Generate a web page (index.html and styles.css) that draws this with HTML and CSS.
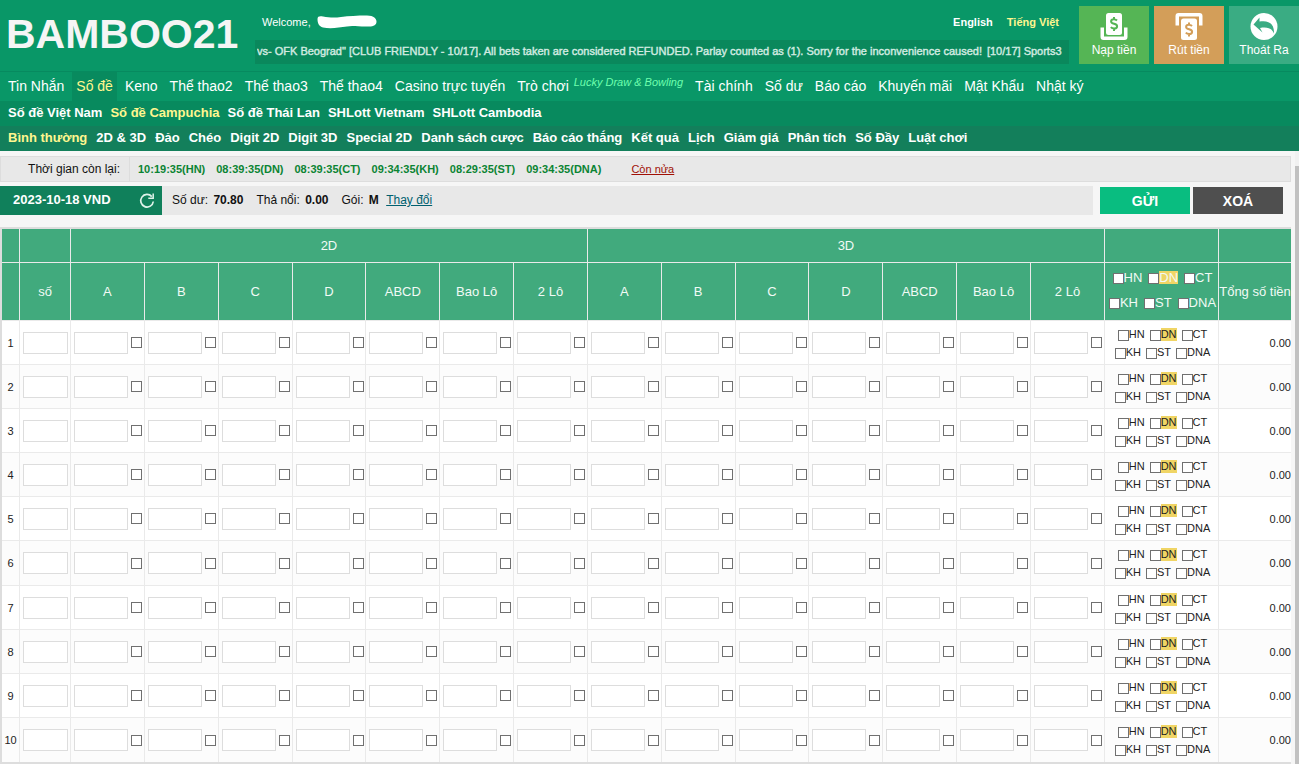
FILE: index.html
```html
<!DOCTYPE html>
<html lang="vi">
<head>
<meta charset="utf-8">
<title>BAMBOO21</title>
<link rel="stylesheet" href="styles.css">
</head>
<body>
<header class="header">
  <div class="masthead">
    <h1 class="logo">BAMBOO21</h1>
    <div class="account">
      <div class="welcome-row">
        <span>Welcome,</span>
        <svg class="user-mask" width="60" height="14" viewBox="0 0 60 14" aria-hidden="true"><path d="M0.500 4C0.500 1 3 1 6 1.500C12 2.500 17 3 24 2C32 1 40 0.500 50 0.500C57 0.500 59.500 4 59.500 6.500C59.500 10 57 11.500 52 11.500C42 12 36 10 30 11.500C22 12.500 14 14 6 12.500C2 11.500 0.500 8 0.500 4Z" fill="#fff"/></svg>
        <nav class="languages"><a href="#">English</a><a href="#" class="is-active">Tiếng Việt</a></nav>
      </div>
      <div class="ticker"><div class="ticker-view"><span class="ticker-text">vs- OFK Beograd" [CLUB FRIENDLY - 10/17]. All bets taken are considered REFUNDED. Parlay counted as (1). Sorry for the inconvenience caused!</span><span class="ticker-text">[10/17] Sports3</span></div></div>
    </div>
    <div class="actions">
      <button class="action action-deposit" type="button">
        <svg width="28" height="28" viewBox="0 0 28 28" aria-hidden="true"><path d="M0.500 14.500h3.500v9h20v-9h3.500V24a3 3 0 0 1-3 3h-21a3 3 0 0 1-3-3z" fill="#fff"/><rect x="6" y="0" width="16" height="22" rx="2.500" fill="#fff"/><path d="M17 7.500c-1-1-2-1.300-3-1.300-1.800 0-2.900.8-2.900 2.200 0 3.200 6 1.600 6 4.800 0 1.500-1.200 2.400-3 2.400-1.300 0-2.500-.5-3.300-1.400M14 4v2.500M14 15.500v2.500" fill="none" stroke="#55b555" stroke-width="2"/></svg>
        <span>Nạp tiền</span>
      </button>
      <button class="action action-withdraw" type="button">
        <svg width="28" height="28" viewBox="0 0 28 28" aria-hidden="true"><path d="M0.500 12.500h3.500V3.500h20v9h3.500V3a3 3 0 0 0-3-3h-21a3 3 0 0 0-3 3z" fill="#fff"/><rect x="6" y="5.500" width="16" height="21.500" rx="2.500" fill="#fff"/><path d="M17 13c-1-1-2-1.300-3-1.300-1.800 0-2.900.8-2.900 2.200 0 3.200 6 1.600 6 4.800 0 1.500-1.200 2.400-3 2.400-1.300 0-2.500-.5-3.300-1.400M14 9.500v2.500M14 21v2.500" fill="none" stroke="#d39e59" stroke-width="2"/></svg>
        <span>Rút tiền</span>
      </button>
      <button class="action action-logout" type="button">
        <svg width="28" height="28" viewBox="0 0 28 28" aria-hidden="true"><circle cx="14" cy="13.500" r="13.500" fill="#fff"/><path d="M3.500 11.500L9.500 4.500L9.500 8.500C18 7 24.500 10 24 20.500C22 15.500 17.500 13.500 10 15L12.500 19.500Z" fill="#3aac83"/></svg>
        <span>Thoát Ra</span>
      </button>
    </div>
  </div>
  <nav class="menu menu-main">
    <a href="#">Tin Nhắn</a><a href="#" class="is-active">Số đề</a><a href="#">Keno</a><a href="#">Thể thao2</a><a href="#">Thể thao3</a><a href="#">Thể thao4</a><a href="#">Casino trực tuyến</a><a href="#">Trò chơi <em>Lucky Draw &amp; Bowling</em></a><a href="#">Tài chính</a><a href="#">Số dư</a><a href="#">Báo cáo</a><a href="#">Khuyến mãi</a><a href="#">Mật Khẩu</a><a href="#">Nhật ký</a>
  </nav>
  <nav class="menu menu-region">
    <a href="#">Số đề Việt Nam</a><a href="#" class="is-active">Số đề Campuchia</a><a href="#">Số đề Thái Lan</a><a href="#">SHLott Vietnam</a><a href="#">SHLott Cambodia</a>
  </nav>
  <nav class="menu menu-type">
    <a href="#" class="is-active">Bình thường</a><a href="#">2D &amp; 3D</a><a href="#">Đảo</a><a href="#">Chéo</a><a href="#">Digit 2D</a><a href="#">Digit 3D</a><a href="#">Special 2D</a><a href="#">Danh sách cược</a><a href="#">Báo cáo thắng</a><a href="#">Kết quả</a><a href="#">Lịch</a><a href="#">Giảm giá</a><a href="#">Phân tích</a><a href="#">Số Đầy</a><a href="#">Luật chơi</a>
  </nav>
</header>
<div class="body">
  <main class="content">
    <section class="timer">
      <span class="timer-label">Thời gian còn lại:</span>
      <div class="timer-list"><span>10:19:35(HN)</span><span>08:39:35(DN)</span><span>08:39:35(CT)</span><span>09:34:35(KH)</span><span>08:29:35(ST)</span><span>09:34:35(DNA)</span></div>
      <a href="#" class="more">Còn nửa</a>
    </section>
    <section class="toolbar">
      <div class="draw"><span>2023-10-18 VND</span>
        <button class="refresh" type="button" aria-label="Refresh"><svg width="16" height="16" viewBox="0 0 16 16"><path d="M12.800 3.600A6.300 6.300 0 1 0 14.300 8.500" fill="none" stroke="#dff3ea" stroke-width="1.700"/><path d="M14.200 0.500V5.200H9.300" fill="none" stroke="#dff3ea" stroke-width="1.500"/></svg></button>
      </div>
      <div class="balance">
        <span>Số dư: <b>70.80</b></span><span>Thả nổi: <b>0.00</b></span><span>Gói: <b>M</b> <a href="#">Thay đổi</a></span>
      </div>
      <div class="submit">
        <button class="btn btn-send" type="button">GỬI</button>
        <button class="btn btn-clear" type="button">XOÁ</button>
      </div>
    </section>
    <div class="sheet">
      <table class="bets">
        <colgroup><col class="col-index"><col class="col-number"><col span="14"><col class="col-places"><col class="col-total"></colgroup>
        <thead>
          <tr class="groups"><th></th><th></th><th colspan="7">2D</th><th colspan="7">3D</th><th></th><th></th></tr>
          <tr class="titles" id="titles"><th></th><th>số</th></tr>
        </thead>
        <tbody id="rows"></tbody>
      </table>
    </div>
  </main>
  <div class="scrollbar"><div class="scroll-thumb"></div></div>
</div>
<script src="app.js"></script>
</body>
</html>
```

FILE: styles.css
```css
* { box-sizing: border-box; }
body {
  margin: 0;
  min-height: 100vh;
  display: flex;
  flex-direction: column;
  background: #f6f6f6;
  color: #222;
  font: 11px/16px "Liberation Sans", Arial, sans-serif;
}
button { font-family: inherit; border: 0; padding: 0; cursor: pointer; }
a { text-decoration: none; color: inherit; }
.header { background: #099767; color: #fff; }
.masthead {
  display: grid;
  grid-template-columns: 247px minmax(0, 1fr) auto;
  column-gap: 8px;
  height: 72px;
  border-bottom: 1px solid #078a5f;
}
.logo { margin: 0; padding: 9px 0 0 6px; font-size: 41px; line-height: 50px; color: #f5f5f5; }
.account { padding-top: 12px; }
.welcome-row { display: flex; align-items: center; height: 20px; padding: 0 10px 0 7px; }
.user-mask { margin-left: 6px; }
.languages { display: flex; gap: 14px; margin-left: auto; font-weight: bold; }
.is-active { color: #fff68f; }
.ticker { height: 24px; margin-top: 8px; padding: 0 2px; background: #0a885c; }
.ticker-view { display: flex; gap: 5px; overflow: hidden; white-space: nowrap; line-height: 23px; }
.ticker-text { color: #d3ebe1; -webkit-text-stroke: 0.4px #d3ebe1; flex: none; }
.actions { display: flex; gap: 5px; padding: 6px 0 0 2px; }
.action {
  width: 70px;
  height: 58px;
  padding-top: 7px;
  display: flex;
  flex-direction: column;
  align-items: center;
  color: #fff;
  font-size: 12px;
  line-height: 18px;
}
.action-deposit { background: #55b555; }
.action-withdraw { background: #d39e59; }
.action-logout { background: #3aac83; }
.menu { display: flex; white-space: nowrap; padding: 0 4px; }
.menu a { padding: 0 4px; }
.menu-main { gap: 4px; font-size: 14px; line-height: 29px; }
.menu-main .is-active { background: #088a5e; }
.menu-main em { font-size: 11px; line-height: 11px; vertical-align: 5px; margin-left: 1px; color: #6effae; }
.menu-region, .menu-type { padding-bottom: 1px; font-size: 13px; font-weight: bold; line-height: 24px; }
.menu-region { background: #088a5e; }
.menu-type { gap: 1px; background: #137f5b; }
.body { flex: 1; display: grid; grid-template-columns: minmax(0, 1fr) 4px; }
.content { padding: 5px 4px 0 0; }
.scrollbar { padding-top: 15px; background: #f1f1f1; display: flex; }
.scroll-thumb { flex: 1; background: #c1c1c1; }
.timer {
  display: flex;
  height: 26px;
  line-height: 24px;
  background: #e8e8e8;
  border: 1px solid #ddd;
  color: #111;
}
.timer-label { width: 129px; padding-right: 9px; text-align: right; font-size: 12px; border-right: 1px solid #ddd; }
.timer-list { display: flex; gap: 11px; padding-left: 8px; font-weight: bold; color: #0b8433; }
.more { margin-left: 30px; color: #a01005; text-decoration: underline; }
.toolbar { display: flex; margin-top: 4px; height: 29px; }
.draw {
  display: flex;
  width: 162px;
  padding: 0 7px 0 13px;
  justify-content: space-between;
  background: #10805b;
  color: #fff;
  font-size: 13px;
  font-weight: bold;
  line-height: 27px;
}
.refresh { background: none; height: 16px; margin-top: 7px; }
.balance {
  flex: 1;
  display: flex;
  gap: 13px;
  padding-left: 10px;
  background: #e8e8e8;
  color: #111;
  font-size: 12px;
  line-height: 29px;
}
.balance b { margin-left: 2px; }
.balance a { margin-left: 4px; color: #00606f; text-decoration: underline; }
.submit { display: flex; gap: 3px; padding: 1px 8px 1px 7px; }
.btn { width: 90px; color: #fff; font-size: 14px; font-weight: bold; }
.btn-send { background: #09bd80; }
.btn-clear { background: #4f4f4f; }
.sheet { margin-top: 12px; border: 2px solid #ddd; border-right: 0; overflow: hidden; }
.bets { width: 100%; table-layout: fixed; border-collapse: separate; border-spacing: 0; background: #fff; }
.col-index { width: 18px; }
.col-number { width: 51px; }
.col-places { width: 114px; }
.col-total { width: 72px; }
.bets th, .bets td { padding: 0; border: 0 solid #eaeaea; border-width: 0 1px 1px 0; }
.bets th:last-child, .bets td:last-child { border-right: 0; }
.bets th { background: #41aa7d; color: #f2faf6; font-size: 13px; font-weight: normal; white-space: nowrap; }
.groups th { height: 34px; }
.titles th { height: 58px; }
.bets td { height: 44px; }
.bets tbody tr:nth-child(6n) td { height: 45px; }
.bets tbody tr:nth-child(even) { background: #fcfcfc; }
.bets tbody tr:last-child td { border-bottom: 0; }
.index { text-align: center; }
.total { text-align: right; }
.entry { display: flex; align-items: center; gap: 3px; padding-left: 3px; }
.field {
  width: 54px;
  height: 22px;
  padding: 0 2px;
  border: 1px solid #ddd;
  background: #fff;
  font: inherit;
}
.field-number { width: 45px; }
.tick {
  appearance: none;
  flex: none;
  width: 11px;
  height: 11px;
  margin: 0;
  border: 1px solid #707070;
  background: #fff;
}
.places { display: flex; flex-direction: column; padding: 1px 0 0 2px; }
.place-line { display: flex; justify-content: center; gap: 5px; height: 18px; }
.place { display: flex; align-items: center; }
.place .tick { margin-top: 2px; }
.place-name { line-height: 13px; }
.place-dn { background: #f0d565; }
.titles .places { padding: 0 0 4px 2px; }
.titles .place-line { height: 25px; gap: 6px; }
```

FILE: app.js
```js
const columns = ["A", "B", "C", "D", "ABCD", "Bao Lô", "2 Lô"];
const placeLines = [["HN", "DN", "CT"], ["KH", "ST", "DNA"]];

const places = () => `<div class="places">${placeLines.map(line =>
  `<div class="place-line">${line.map(name =>
    `<label class="place"><input class="tick" type="checkbox"><span class="place-name place-${name.toLowerCase()}">${name}</span></label>`
  ).join("")}</div>`).join("")}</div>`;

const titles = document.getElementById("titles");
titles.innerHTML += [...columns, ...columns].map(name => `<th>${name}</th>`).join("")
  + `<th>${places()}</th><th>Tổng số tiền</th>`;

const entry = (row, group, name) => `<td><div class="entry">
  <input class="field" type="text" aria-label="${group} ${name} ${row}">
  <input class="tick" type="checkbox" aria-label="${group} ${name} ${row}"></div></td>`;

let html = "";
for (let row = 1; row <= 10; row++) {
  html += `<tr><td class="index">${row}</td>
    <td><div class="entry"><input class="field field-number" type="text" aria-label="số ${row}"></div></td>
    ${["2D", "3D"].map(group => columns.map(name => entry(row, group, name)).join("")).join("")}
    <td>${places()}</td><td class="total">0.00</td></tr>`;
}
document.getElementById("rows").innerHTML = html;
```
